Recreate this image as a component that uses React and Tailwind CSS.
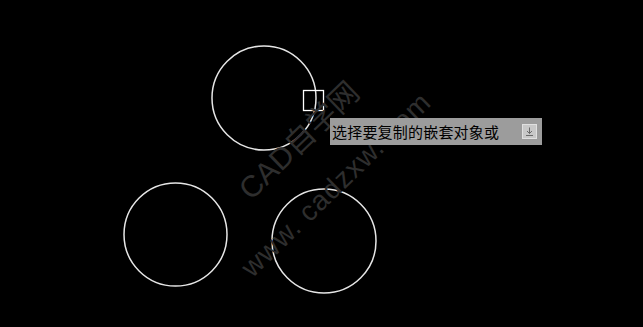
// CAD drawing canvas with a command tooltip
export default function App() {
  return (
    <div className="relative w-[643px] h-[327px] bg-black overflow-hidden font-['Noto_Sans_CJK_SC',sans-serif]">
      {/* Drawing */}
      <svg
        className="absolute inset-0"
        width="643"
        height="327"
        viewBox="0 0 643 327"
        fill="none"
        stroke="#e6e6e6"
        strokeWidth="1.5"
      >
        <circle cx="264" cy="98" r="52" />
        <circle cx="175.5" cy="234.5" r="51.5" />
        <circle cx="324" cy="241" r="52" />
        <rect x="303.5" y="90.5" width="20" height="20" strokeWidth="1.3" stroke="#ffffff" />
      </svg>

      {/* Watermark */}
      <div className="absolute left-[244px] top-[179px] origin-left -rotate-[44deg] text-[30px] leading-none text-[#2e2e2e] whitespace-nowrap font-['Liberation_Sans','Noto_Sans_CJK_SC',sans-serif]">
        CAD自学网
      </div>
      <div className="absolute left-[246px] top-[258px] origin-left -rotate-[44deg] text-[28px] leading-none text-[#2e2e2e] whitespace-nowrap tracking-[1px] font-['Liberation_Sans',sans-serif]">
        www. cadzxw. com
      </div>

      {/* Command tooltip */}
      <div className="absolute left-[330px] top-[118px] w-[212px] h-[27px] bg-[#9c9c9c] flex items-center justify-between pl-[2px] pr-[5px]">
        <span className="text-[15px] leading-none text-black tracking-[0.2px]">
          选择要复制的嵌套对象或
        </span>
        <span className="w-[15px] h-[15px] bg-[#c8c8c8] border border-[#e0e0e0] flex items-center justify-center">
          <svg width="11" height="11" viewBox="0 0 11 11" fill="none" stroke="#6a6a6a" strokeWidth="1">
            <path d="M5.5 1.5v6M3 5l2.5 2.5L8 5M2 9.5h7" />
          </svg>
        </span>
      </div>
    </div>
  );
}
